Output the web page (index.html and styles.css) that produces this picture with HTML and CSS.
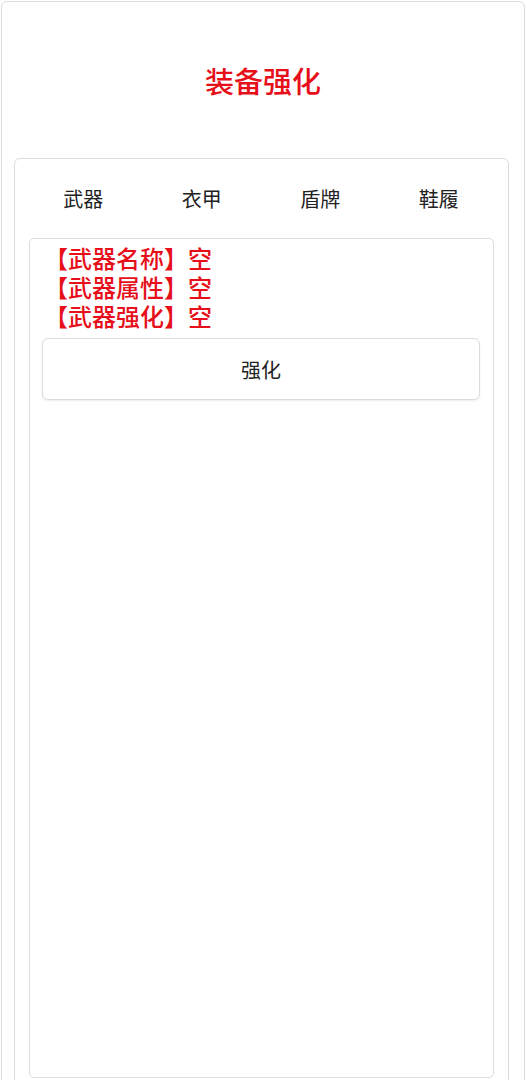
FILE: index.html
```html
<!DOCTYPE html>
<html lang="zh-CN">
<head>
    <meta charset="UTF-8">
    <meta name="viewport" content="width=device-width, initial-scale=1.0">
    <title>装备强化</title>
    <link rel="stylesheet" href="styles.css">
</head>
<body>
    <div class="page">
        <div class="title">装备强化</div>
        <div class="panel">
            <div class="tabs">
                <div class="tab">武器</div>
                <div class="tab">衣甲</div>
                <div class="tab">盾牌</div>
                <div class="tab">鞋履</div>
            </div>
            <div class="detail">
                <div class="info">
                    <p>【武器名称】空</p>
                    <p>【武器属性】空</p>
                    <p>【武器强化】空</p>
                </div>
                <button type="button" class="upgrade-btn">强化</button>
            </div>
        </div>
    </div>
</body>
</html>
```

FILE: styles.css
```css
* {
    margin: 0;
    padding: 0;
    box-sizing: border-box;
}

body {
    font-family: "Noto Sans CJK SC", "Noto Sans", sans-serif;
    background-color: #ffffff;
    color: #333;
    overflow: hidden;
    height: 1080px;
}

.page {
    margin: 1px 2px 0 1px;
    border: 1px solid #dcdcdc;
    border-radius: 6px;
    min-height: 1120px;
}

.title {
    height: 156px;
    display: flex;
    justify-content: center;
    align-items: center;
    color: #e60f1a;
    font-size: 29px;
    font-weight: 500;
}

.panel {
    margin: 0 15px 0 12px;
    border: 1px solid #dcdcdc;
    border-radius: 6px;
    min-height: 960px;
}

.tabs {
    display: grid;
    grid-template-columns: repeat(4, 1fr);
    height: 79px;
    padding: 0 10px 0 9px;
    align-items: center;
}

.tab {
    text-align: center;
    font-size: 20px;
    color: #222;
}

.detail {
    margin: 0 14px;
    height: 840px;
    border: 1px solid #dcdcdc;
    border-radius: 5px;
    padding: 4px 13px 0 12px;
}

.info {
    padding-left: 2px;
}

.info p {
    color: #e60f1a;
    font-size: 24px;
    font-weight: 500;
    line-height: 29px;
}

.upgrade-btn {
    display: block;
    width: 100%;
    height: 62px;
    margin-top: 8px;
    background-color: #fff;
    border: 1px solid #dcdcdc;
    border-radius: 6px;
    box-shadow: 0 1px 2px rgba(0, 0, 0, 0.08);
    font-family: inherit;
    font-size: 20px;
    color: #222;
    cursor: pointer;
}
```
